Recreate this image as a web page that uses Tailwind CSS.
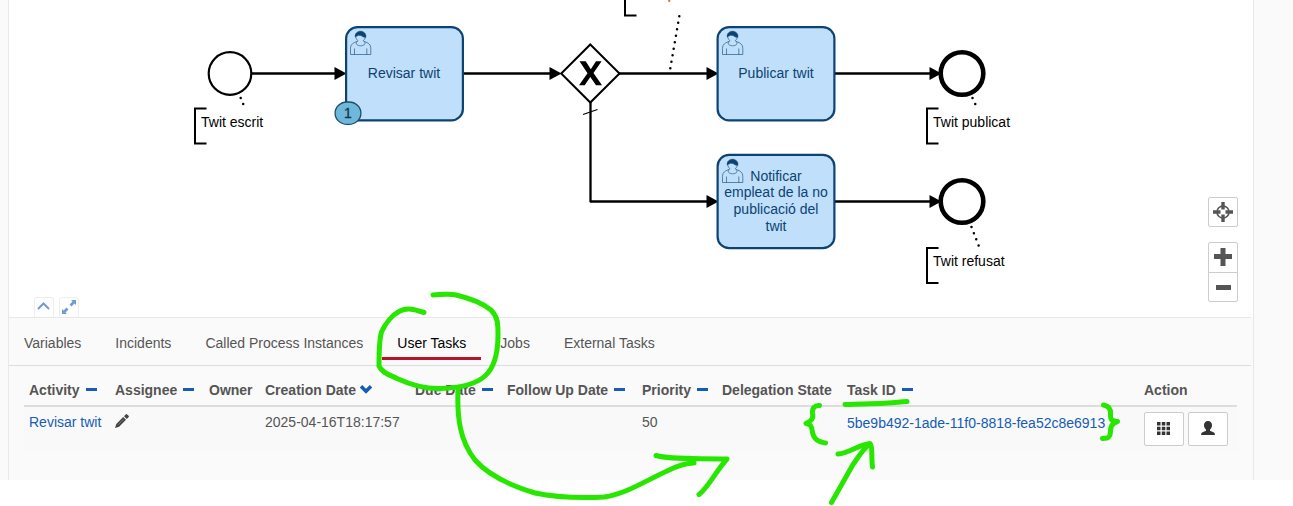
<!DOCTYPE html>
<html lang="ca">
<head>
<meta charset="utf-8">
<title>Process instance</title>
<script src="https://cdn.jsdelivr.net/npm/@tailwindcss/browser@4"></script>
</head>
<body class="relative h-[506px] w-[1293px] overflow-hidden bg-white font-['Liberation_Sans',Arial,sans-serif] text-[14px] leading-5 text-[#555]">
<div class="flex h-[480px] bg-[#fafafa] pl-2">
  <main class="flex w-[1246px] flex-col border-x border-[#e8e8e8]">
    <!-- Process diagram -->
    <section class="relative h-[317px] bg-white">
      <svg class="block h-[317px] w-[1244px]" viewBox="9 0 1244 317" font-size="14" font-family="'Liberation Sans', Arial, sans-serif">
        <defs>
          <g id="user" fill="none" stroke="#0d4372" stroke-width=".6">
            <path d="M7 10.500C3 11.800.5 13.500 .5 17.500V23.500H20.800V17.500C20.800 13.500 18.300 11.800 14.300 10.500C16.500 13 13.500 14.800 10.600 14.800C7.700 14.800 4.800 13 7 10.500ZM4.500 23.500V17.500M16.800 23.500V17.500M7 10.500L8 9.700C6 8 5.300 6 5.700 4M14.300 10.500L13.200 9.700C15.200 8 15.900 6 15.500 4"/>
            <path d="M5.300 6C4.700 2.500 7.500 .3 10.500 .3C13.500 .3 16.500 2.500 15.700 6.200C14 6.500 12.500 5.700 11.500 4.800C9.500 4 7.500 4.200 5.300 6Z" fill="#0d4372"/>
          </g>
          <path id="arrow" d="M-12-6.500L0 0L-12 6.500Z"/>
        </defs>
        <g fill="none" stroke="#000" stroke-width="2.300">
          <path d="M252 73.500H336M463 73.500H550M619 73.500H707M835 73.500H930M590.500 102V201.500H707M835 201.500H930" stroke-linejoin="round"/>
          <circle cx="230" cy="73.500" r="21.300" stroke-width="2.200"/>
          <circle cx="962" cy="73.500" r="21.300" stroke-width="4.600"/>
          <circle cx="962" cy="201.500" r="21.300" stroke-width="4.600"/>
          <path d="M590.300 44.500L619.500 73.500L590.300 102.500L561.200 73.500Z" fill="#fff" stroke-width="2"/>
          <path d="M583 114.500L597.500 109.500" stroke-width="1.300"/>
          <path d="M206.500 108.500H195V143.500H206.500M938.500 108.500H927V143.500H938.500M938.500 248H927V283H938.500M625 0V15.500H636.500" stroke-width="2"/>
          <path d="M679.300 16.300L669.500 73M240.700 98L243.800 105.500M972.500 98L975.900 105.500M971.500 227L979 246.500" stroke-width="2.500" stroke-linecap="round" stroke-dasharray="0 6.600"/>
        </g>
        <use href="#arrow" x="346.500" y="73.500"/><use href="#arrow" x="561.500" y="73.500"/><use href="#arrow" x="718.500" y="73.500"/><use href="#arrow" x="718.500" y="201.500"/><use href="#arrow" x="941.500" y="73.500"/><use href="#arrow" x="941.500" y="201.500"/>
        <path d="M579.500 61.300H585.700L590.800 69.300L596 61.300H601.600L593.500 73L602 85.300H596L590.300 77L584.700 85.300H579L587.500 73.200Z"/>
        <path d="M668.300 0H670.200V1.800H668.300Z" fill="#c96b22"/>
        <g fill="#bfdffa" stroke="#0d4372" stroke-width="2.200">
          <rect x="346.100" y="27.100" width="116.800" height="93.300" rx="11.500"/>
          <rect x="717.600" y="27.100" width="116.800" height="93.300" rx="11.500"/>
          <rect x="717.600" y="154.900" width="116.800" height="93.300" rx="11.500"/>
        </g>
        <use href="#user" x="350" y="31"/><use href="#user" x="722" y="31"/><use href="#user" x="722" y="159"/>
        <g fill="#0d4372" text-anchor="middle">
          <text x="404" y="78">Revisar twit</text>
          <text x="776" y="78">Publicar twit</text>
          <text x="776" y="181">Notificar</text>
          <text x="776" y="197">empleat de la no</text>
          <text x="776" y="214">publicació del</text>
          <text x="776" y="231">twit</text>
        </g>
        <g fill="#000">
          <text x="201" y="127">Twit escrit</text>
          <text x="933" y="127">Twit publicat</text>
          <text x="933" y="266">Twit refusat</text>
        </g>
        <rect x="335.100" y="102" width="25.800" height="22.400" rx="12" fill="#70b8db" stroke="#1f4f63" stroke-width="1.300"/>
        <text x="348" y="118" text-anchor="middle" fill="#143646" stroke="#143646" stroke-width=".3">1</text>
      </svg>
      <!-- Zoom controls -->
      <div class="absolute top-[197px] right-[15px] flex w-[30px] flex-col">
        <button class="mb-[15px] flex h-[30px] items-center justify-center rounded-[2px] border border-[#ccc] bg-white">
          <svg class="size-5" viewBox="0 0 20 20"><circle cx="10" cy="10" r="6" fill="none" stroke="#555" stroke-width="1.600"/><path d="M8.300 0H11.700V7.500H8.300ZM8.300 12.500H11.700V20H8.300ZM0 8.300H7.500V11.700H0ZM12.500 8.300H20V11.700H12.500Z" fill="#555"/></svg>
        </button>
        <button class="flex h-[31px] items-start justify-center rounded-t-[2px] border border-[#ccc] bg-white pt-[5px]"><svg class="h-[18px] w-[18px]" viewBox="0 0 18 18"><path d="M6.500 0H11.500V6H18V11H11.500V18H6.500V11H0V6H6.500Z" fill="#555"/></svg></button>
        <button class="-mt-px flex h-[30px] items-center justify-center rounded-b-[2px] border border-[#ccc] bg-white pl-px"><svg class="h-[5px] w-[15px]" viewBox="0 0 15 5"><path d="M0 0H15V5H0Z" fill="#555"/></svg></button>
      </div>
      <!-- Panel size handles -->
      <div class="absolute bottom-0 left-[25px] flex gap-[5px]">
        <button class="flex h-5 w-5 items-start justify-center rounded-t-[3px] border border-b-0 border-[#eee] bg-white pt-[4px] pr-px"><svg class="h-2 w-[13px]" viewBox="0 0 13 8"><path d="M1 7L6.500 1.500L12 7" fill="none" stroke="#729bd2" stroke-width="2"/></svg></button>
        <button class="flex h-5 w-5 items-start justify-center rounded-t-[3px] border border-b-0 border-[#eee] bg-white pt-[2px]"><svg class="size-[14px]" viewBox="0 0 14 14"><path d="M9 0H14V5L12.500 3.500L9.500 6.500L7.500 4.500L10.500 1.500ZM5 14H0V9L1.500 10.500L4.500 7.500L6.500 9.500L3.500 12.500Z" fill="#729bd2"/></svg></button>
      </div>
    </section>
    <!-- Instance details -->
    <section class="mr-[2px] flex-1 border-t border-[#e8e8e8]">
      <nav class="flex h-12 gap-1 border-b border-[#ddd]">
        <a class="h-[42px] px-[15px] pt-[15px]">Variables</a>
        <a class="h-[42px] px-[15px] pt-[15px]">Incidents</a>
        <a class="h-[42px] px-[15px] pt-[15px]">Called Process Instances</a>
        <a class="h-[42px] border-b-3 border-[#b5152b] px-[15px] pt-[15px] text-black">User Tasks</a>
        <a class="h-[42px] px-[15px] pt-[15px]">Jobs</a>
        <a class="h-[42px] px-[15px] pt-[15px]">External Tasks</a>
      </nav>
      <div class="ml-[15px] w-[1213px] pt-[9px]">
        <div class="grid h-8 grid-cols-[86px_94px_56px_150px_92px_135px_80px_125px_297px_98px] border-b-2 border-[#ddd] font-bold whitespace-nowrap">
          <div class="flex gap-[6px] pt-[5px] pl-[5px]">Activity<span class="mt-2 h-[3px] w-[11px] bg-[#155cb5]"></span></div>
          <div class="flex gap-[6px] pt-[5px] pl-[5px]">Assignee<span class="mt-2 h-[3px] w-[11px] bg-[#155cb5]"></span></div>
          <div class="pt-[5px] pl-[5px]">Owner</div>
          <div class="flex gap-1 pt-[5px] pl-[5px]">Creation Date<svg class="mt-[5px] h-[9px] w-3" viewBox="0 0 12 9"><path d="M1 1.300L6 6.300L11 1.300" fill="none" stroke="#155cb5" stroke-width="3.500"/></svg></div>
          <div class="flex gap-[6px] pt-[5px] pl-[5px]">Due Date<span class="mt-2 h-[3px] w-[11px] bg-[#155cb5]"></span></div>
          <div class="flex gap-[6px] pt-[5px] pl-[5px]">Follow Up Date<span class="mt-2 h-[3px] w-[11px] bg-[#155cb5]"></span></div>
          <div class="flex gap-[6px] pt-[5px] pl-[5px]">Priority<span class="mt-2 h-[3px] w-[11px] bg-[#155cb5]"></span></div>
          <div class="pt-[5px] pl-[5px]">Delegation State</div>
          <div class="flex gap-[6px] pt-[5px] pl-[5px]">Task ID<span class="mt-2 h-[3px] w-[11px] bg-[#155cb5]"></span></div>
          <div class="pt-[5px] pl-[5px]">Action</div>
        </div>
        <div class="grid h-11 grid-cols-[86px_94px_56px_150px_92px_135px_80px_125px_297px_98px] bg-[#f9f9f9] whitespace-nowrap">
          <a class="pt-[5px] pl-[5px] text-[#155cb5]">Revisar twit</a>
          <div class="pt-[7px] pl-[5px]"><svg class="size-[14px]" viewBox="0 0 14 14"><path d="M0 14L1.300 9.900L8.200 3L11 5.800L4.100 12.700ZM9 2.200L11 .3Q11.600-.2 12.200.4L13.600 1.800Q14.200 2.400 13.700 3L11.800 5Z" fill="#444"/><path d="M3 10.800L8.700 5.100" stroke="#999" stroke-width=".6"/></svg></div>
          <div></div>
          <div class="pt-[5px] pl-[5px]">2025-04-16T18:17:57</div>
          <div></div><div></div>
          <div class="pt-[5px] pl-[5px]">50</div>
          <div></div>
          <a class="pt-[6px] pl-[5px] text-[#155cb5]">5be9b492-1ade-11f0-8818-fea52c8e6913</a>
          <div class="flex gap-1 pt-[5px] pl-[5px]">
            <button class="flex h-[34px] w-10 items-start justify-center rounded-[2px] border border-[#ccc] bg-white pt-[9px] pr-px"><svg class="h-[13px] w-[13px]" viewBox="0 0 13 13"><path d="M0 0H3.500V3.500H0ZM4.800 0H8.300V3.500H4.800ZM9.500 0H13V3.500H9.500ZM0 4.800H3.500V8.300H0ZM4.800 4.800H8.300V8.300H4.800ZM9.500 4.800H13V8.300H9.500ZM0 9.500H3.500V13H0ZM4.800 9.500H8.300V13H4.800ZM9.500 9.500H13V13H9.500Z" fill="#333"/></svg></button>
            <button class="flex h-[34px] w-10 items-start justify-center rounded-[2px] border border-[#ccc] bg-white pt-[8px]"><svg class="h-[14px] w-[14px]" viewBox="0 0 14 14"><path d="M7 0C9.500 0 11 1.800 11 4C11 6 10.200 7.500 9 8.500V9.800L13 11.500Q14 12 14 14H0Q0 12 1 11.500L5 9.800V8.500C3.800 7.500 3 6 3 4C3 1.800 4.500 0 7 0Z" fill="#333"/></svg></button>
          </div>
        </div>
      </div>
    </section>
  </main>
</div>
<!-- Hand-drawn marks -->
<svg class="pointer-events-none absolute inset-0 h-[506px] w-[1293px]" viewBox="0 0 1293 506" fill="none" stroke="#27e600" stroke-width="5" stroke-linecap="round" stroke-linejoin="round">
  <path d="M424 312.500C416 310 408 307 400 311C392 315 385 324 381.500 332C379 341 379 350 379 366C382 373 390 375 397 378.500C411 385 425 389 441 388.500C458 388 475 385 485 376C495 367 498 351 498 335C498 324 498 317 491 310C481 302 469 298 456 295C449 293.500 443 294.500 433 295"/>
  <path d="M458 391C457 418 460 441 475 460C491 478 515 487 535 493C559 498 584 498 604 497C626 494 645 481 667 471C677 466 685 463 694 463"/>
  <path d="M656 455.500C672 460 696 458 727 459C716 471 708 488 699 494.500"/>
  <path d="M845 404.500C860 404 872 403.500 881 403.500S899 402 907 401.500"/>
  <path d="M819.500 405.500C815 405 812 408 812.500 413C814 419 811 421 806 423.500C815 425 810 433 815 438C818 442 821 442 825.500 443"/>
  <path d="M1103.500 405C1109 406 1111 409 1110.500 414C1110 420 1112 421 1117.500 421.500C1109 424 1111 431 1110 435C1108 439 1107 438 1102.500 438.500"/>
  <path d="M831.500 502.500L853 464.500C859 456 863 449 869 445M838 454C849 453 858 445 870 443.500C873 446 871 456 872.500 467"/>
</svg>
</body>
</html>
